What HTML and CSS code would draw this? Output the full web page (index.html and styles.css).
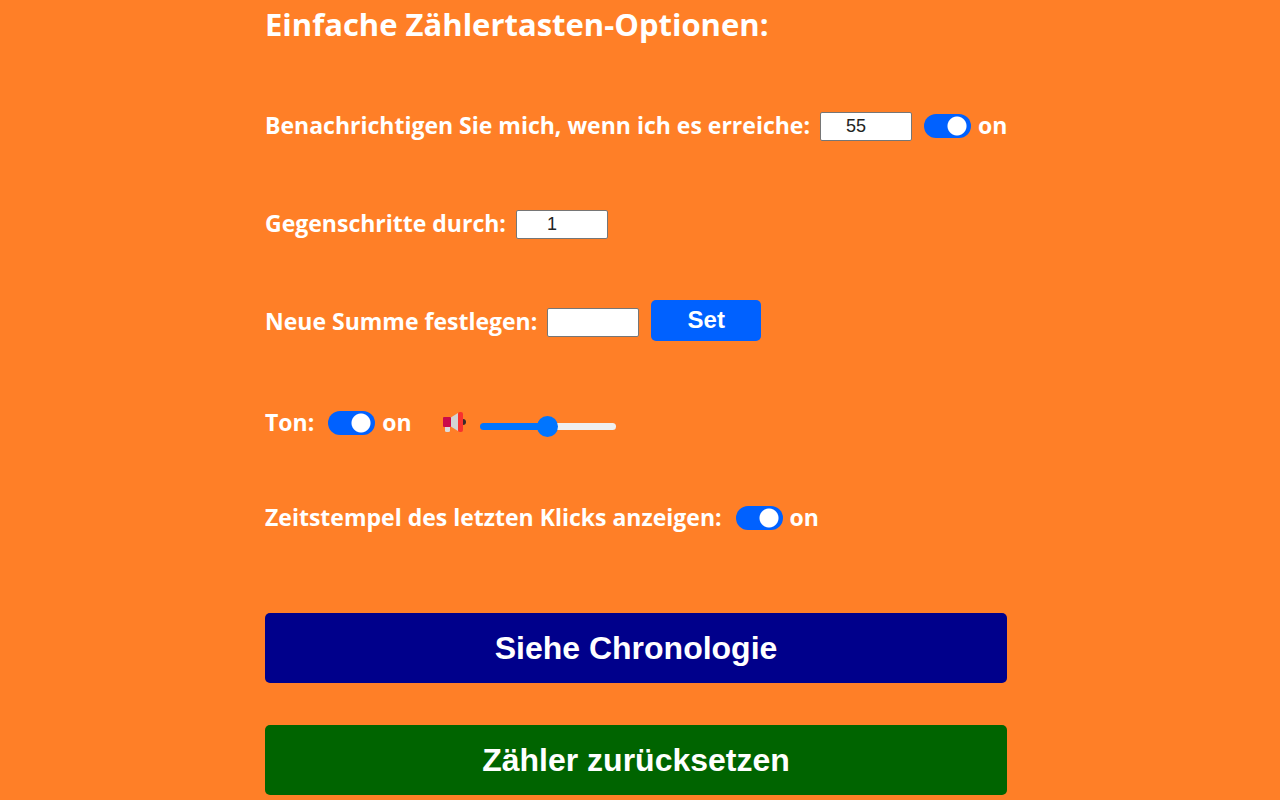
FILE: index.html
```html
<!DOCTYPE html>
<html lang="de">
<head>
<meta charset="utf-8">
<meta name="viewport" content="width=device-width, initial-scale=1">
<title>Einfache Zählertasten-Optionen</title>
<link rel="stylesheet" href="styles.css">
</head>
<body>
<main class="options">
  <h1 class="title">Einfache Zählertasten-Optionen:</h1>
  <div class="row">
    <label class="label" for="notify">Benachrichtigen Sie mich, wenn ich es erreiche:</label>
    <input class="number" id="notify" type="text" inputmode="numeric" value="55">
    <label class="switch"><input class="toggle" type="checkbox" checked><span class="state">on</span></label>
  </div>
  <div class="row">
    <label class="label" for="step">Gegenschritte durch:</label>
    <input class="number" id="step" type="text" inputmode="numeric" value="1">
  </div>
  <div class="row">
    <label class="label" for="total">Neue Summe festlegen:</label>
    <input class="number" id="total" type="text" inputmode="numeric">
    <button class="set" type="button">Set</button>
  </div>
  <div class="row sound">
    <span class="label">Ton:</span>
    <label class="switch"><input class="toggle" type="checkbox" aria-label="Ton" checked><span class="state">on</span></label>
    <div class="volume">
      <svg class="horn" viewBox="0 0 24 24" aria-hidden="true">
        <circle cx="21" cy="11" r="3" fill="#3b2a2a"/>
        <path d="M3 14h5v5.500Q8 21 6.500 21H4.500Q3 21 3 19.500z" fill="#dcdcdc"/>
        <path d="M8 7l8-5v18l-8-5z" fill="#d3d3d3"/>
        <rect x="1" y="6" width="8" height="10" rx="1" fill="#ca0b4a"/>
        <rect x="16" y="1" width="5" height="20" rx="2" fill="#f8312f"/>
      </svg>
      <input class="slider" type="range" min="0" max="100" value="50" aria-label="Lautstärke">
    </div>
  </div>
  <div class="row">
    <span class="label">Zeitstempel des letzten Klicks anzeigen:</span>
    <label class="switch"><input class="toggle" type="checkbox" aria-label="Zeitstempel des letzten Klicks anzeigen" checked><span class="state">on</span></label>
  </div>
  <div class="actions">
    <button class="action history" type="button">Siehe Chronologie</button>
    <button class="action reset" type="button">Zähler zurücksetzen</button>
  </div>
</main>
</body>
</html>
```
FILE: styles.css
```css
* {
  box-sizing: border-box;
}

body {
  margin: 0;
  padding: 0 8px 5px 0;
  background: #ff7f27;
  color: #fff;
  font: 700 23px/32px "Segoe UI", "Open Sans", sans-serif;
}

.options {
  max-width: 742px;
  margin: 0 auto;
}

.title {
  margin: 0 0 52px;
  font-size: 31px;
  line-height: 48px;
}

.row {
  display: flex;
  align-items: center;
  gap: 10px;
  min-height: 52px;
  margin-bottom: 46px;
}

.sound {
  padding-top: 6px;
}

.label,
.state {
  padding-bottom: 3px;
  white-space: nowrap;
}

.number {
  width: 92px;
  height: 29px;
  margin: 1px 2px 0 0;
  padding: 0 20px 0 0;
  border: 1px solid #767676;
  border-radius: 2px;
  background: #fff;
  color: #222;
  font: 400 18px "Liberation Sans", Arial, sans-serif;
  text-align: center;
}

.switch {
  display: flex;
  align-items: center;
  gap: 7px;
}

.toggle {
  appearance: none;
  width: 47px;
  height: 24px;
  margin: 0;
  border-radius: 12px;
  background: radial-gradient(circle at 33px 12px, #fff 9px, #0061ff 10px);
}

.label + .switch {
  margin-left: 4px;
}

.set {
  width: 110px;
  height: 41px;
  margin-bottom: 4px;
  padding: 0;
  border: 0;
  border-radius: 5px;
  background: #0061ff;
  color: #fff;
  font: 700 24px "Liberation Sans", Arial, sans-serif;
}

.volume {
  display: flex;
  align-items: center;
  gap: 14px;
  margin-left: 20px;
}

.horn {
  width: 24px;
  height: 24px;
}

.slider {
  appearance: none;
  width: 136px;
  height: 7px;
  margin: 6px 0 0;
  border-radius: 4px;
  background: linear-gradient(90deg, #0075ff 50%, #efefef 50%);
}

.slider::-webkit-slider-thumb {
  appearance: none;
  width: 21px;
  height: 21px;
  border-radius: 50%;
  background: #0075ff;
}

.actions {
  display: grid;
  gap: 42px;
  padding-top: 23px;
}

.action {
  height: 70px;
  border: 0;
  border-radius: 5px;
  color: #fff;
  font: 700 32px "Liberation Sans", Arial, sans-serif;
}

.history {
  background: #00008b;
}

.reset {
  background: #006400;
}
```
